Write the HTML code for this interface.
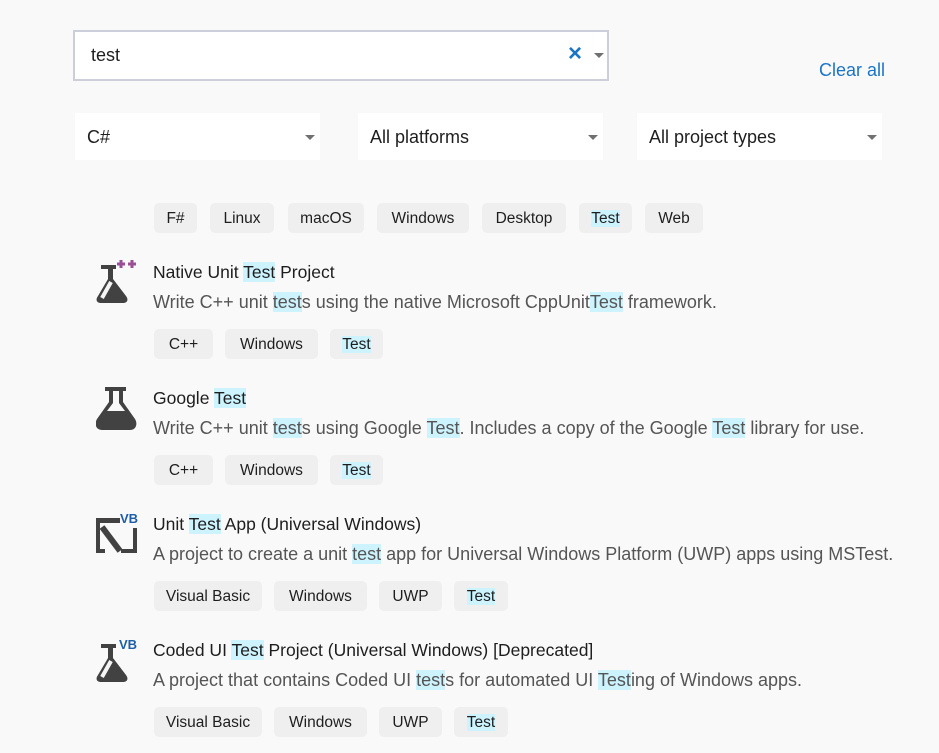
<!DOCTYPE html>
<html><head><meta charset="utf-8"><style>
body{margin:0;width:939px;height:753px;background:#f9f9f9;font-family:"Liberation Sans",sans-serif;position:relative;overflow:hidden;color:#1e1e1e}
.a{position:absolute}
.search{left:73px;top:30px;width:532px;height:47px;background:#fff;border:2px solid #ccceda;}
.dd{background:#fff;height:47px;top:113px;width:245px}
.dd span{position:absolute;left:12px;top:14px;font-size:18px}
.arr{position:absolute;width:0;height:0;border-left:5px solid transparent;border-right:5px solid transparent;border-top:5px solid #707070}
.tag{position:absolute;height:30px;background:#efefef;border-radius:5px;font-size:15.5px;line-height:31px;text-align:center}
.t{font-size:17.5px;position:absolute;left:153px}
.d{font-size:18px;position:absolute;left:153px;color:#555;white-space:nowrap}
.h{background:#cdf3ff}
</style></head><body>
<div class="a search"><span class="a" style="left:16px;top:13px;font-size:18px">test</span>
<span class="a" style="left:493px;top:8px;font-size:24px;color:#1c74c6;font-weight:bold">×</span>
<div class="arr" style="left:519px;top:21px"></div></div>
<div class="a" style="left:819px;top:60px;font-size:18px;color:#1c74c6">Clear all</div>
<div class="a dd" style="left:75px"><span>C#</span><div class="arr" style="left:230px;top:22px"></div></div>
<div class="a dd" style="left:358px"><span>All platforms</span><div class="arr" style="left:230px;top:22px"></div></div>
<div class="a dd" style="left:637px"><span>All project types</span><div class="arr" style="left:230px;top:22px"></div></div>

<div class="tag" style="left:154px;top:203px;width:43px">F#</div>
<div class="tag" style="left:210px;top:203px;width:64px">Linux</div>
<div class="tag" style="left:288px;top:203px;width:76px">macOS</div>
<div class="tag" style="left:377px;top:203px;width:92px">Windows</div>
<div class="tag" style="left:482px;top:203px;width:84px">Desktop</div>
<div class="tag" style="left:579px;top:203px;width:53px"><span class="h">Test</span></div>
<div class="tag" style="left:645px;top:203px;width:58px">Web</div>

<!-- item 1 -->
<svg class="a" style="left:96px;top:258px" width="44" height="48" viewBox="0 0 44 48">
<path d="M5 7h15v4h-3v10l13 17c3 4 1 7-3 7H5c-4 0-6-3-3-7l10-17V11H5z" fill="#424242"/>
<path d="M15 24l-9 16" stroke="#f5f5f5" stroke-width="4"/>
<path d="M21 6h8M25 2v8M32 6h8M36 2v8" stroke="#9b4f96" stroke-width="3"/></svg>
<div class="t" style="top:262px">Native Unit <span class="h">Test</span> Project</div>
<div class="d" style="top:292px">Write C++ unit <span class="h">test</span>s using the native Microsoft CppUnit<span class="h">Test</span> framework.</div>
<div class="tag" style="left:154px;top:329px;width:59px">C++</div>
<div class="tag" style="left:225px;top:329px;width:93px">Windows</div>
<div class="tag" style="left:330px;top:329px;width:53px"><span class="h">Test</span></div>

<!-- item 2 -->
<svg class="a" style="left:96px;top:386px" width="44" height="46" viewBox="0 0 44 46">
<path d="M9 1h21v4h-3v11l12 17c3 5 1 11-5 11H6c-6 0-8-6-5-11l12-17V5H9z" fill="#424242"/>
<path d="M17 5v12l-6 8h18l-6-8V5z" fill="#f9f9f9"/></svg>
<div class="t" style="top:388px">Google <span class="h">Test</span></div>
<div class="d" style="top:418px">Write C++ unit <span class="h">test</span>s using Google <span class="h">Test</span>. Includes a copy of the Google <span class="h">Test</span> library for use.</div>
<div class="tag" style="left:154px;top:455px;width:59px">C++</div>
<div class="tag" style="left:225px;top:455px;width:93px">Windows</div>
<div class="tag" style="left:330px;top:455px;width:53px"><span class="h">Test</span></div>

<!-- item 3 -->
<svg class="a" style="left:95px;top:512px" width="46" height="44" viewBox="0 0 46 44">
<path d="M1 6h24v5H5v26h5v4H1z" fill="#424242"/><path d="M38 16h4v25H26v-4h12z" fill="#424242"/>
<path d="M7 15l18 24" stroke="#424242" stroke-width="6"/>
<text x="25" y="11" font-family="Liberation Sans" font-weight="bold" font-size="13" fill="#1e5ea8">VB</text></svg>
<div class="t" style="top:514px">Unit <span class="h">Test</span> App (Universal Windows)</div>
<div class="d" style="top:544px">A project to create a unit <span class="h">test</span> app for Universal Windows Platform (UWP) apps using MSTest.</div>
<div class="tag" style="left:154px;top:581px;width:108px">Visual Basic</div>
<div class="tag" style="left:274px;top:581px;width:93px">Windows</div>
<div class="tag" style="left:379px;top:581px;width:63px">UWP</div>
<div class="tag" style="left:454px;top:581px;width:54px"><span class="h">Test</span></div>

<!-- item 4 -->
<svg class="a" style="left:96px;top:637px" width="46" height="46" viewBox="0 0 46 46">
<path d="M5 7h15v4h-3v10l13 17c3 4 1 7-3 7H5c-4 0-6-3-3-7l10-17V11H5z" fill="#424242"/>
<path d="M15 24l-9 16" stroke="#f5f5f5" stroke-width="4"/>
<text x="23" y="12" font-family="Liberation Sans" font-weight="bold" font-size="13" fill="#1e5ea8">VB</text></svg>
<div class="t" style="top:640px">Coded UI <span class="h">Test</span> Project (Universal Windows) [Deprecated]</div>
<div class="d" style="top:670px">A project that contains Coded UI <span class="h">test</span>s for automated UI <span class="h">Test</span>ing of Windows apps.</div>
<div class="tag" style="left:154px;top:707px;width:108px">Visual Basic</div>
<div class="tag" style="left:274px;top:707px;width:93px">Windows</div>
<div class="tag" style="left:379px;top:707px;width:63px">UWP</div>
<div class="tag" style="left:454px;top:707px;width:54px"><span class="h">Test</span></div>
</body></html>
